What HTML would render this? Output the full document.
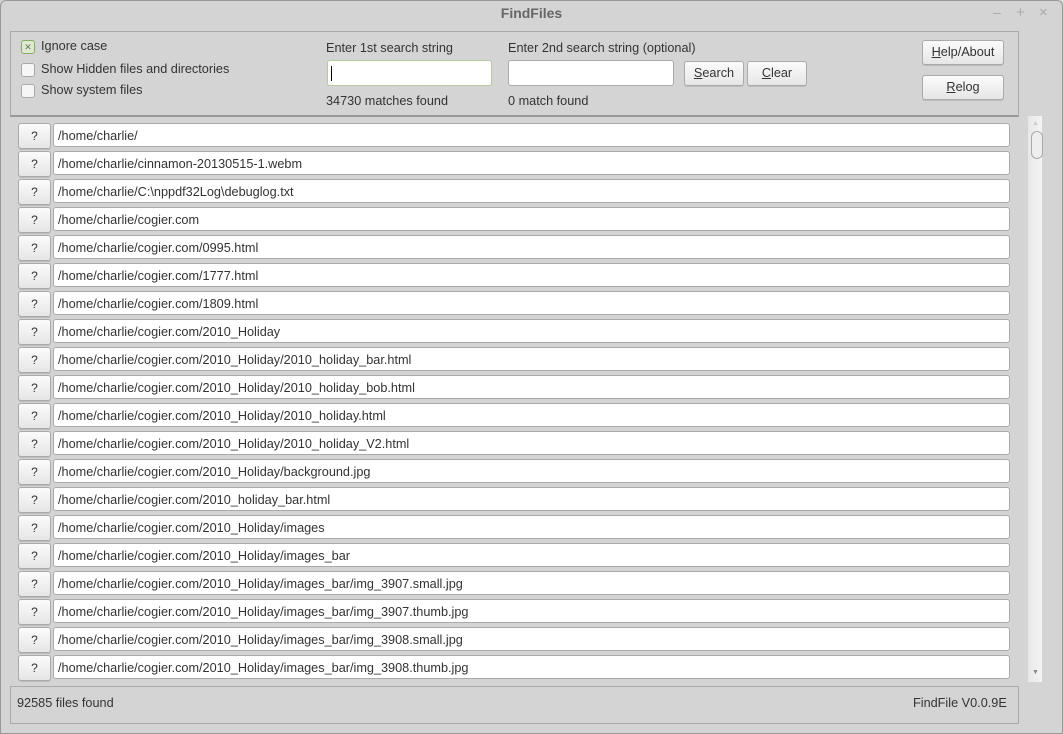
<!DOCTYPE html>
<html><head><style>
body{margin:0;width:1063px;height:734px;background:#d4d4d4;font-family:"Liberation Sans",sans-serif;font-size:12.7px;color:#333;position:relative;overflow:hidden}
.a{position:absolute}
.title{left:0;top:0;width:1063px;height:26px;text-align:center;line-height:26px;font-weight:bold;font-size:14px;color:#666}
.panel{left:10px;top:31px;width:1007px;height:83px;border:1px solid #aaa;border-bottom:2px solid #999}
.cb{width:12px;height:12px;border:1px solid #aaa;border-radius:3px;background:#f6f6f6}
.btn{border:1px solid #aaa;border-radius:3px;background:linear-gradient(#fbfbfb,#e6e6e6);text-align:center;box-shadow:0 1px 0 #bbb;color:#333}
.inp{background:#fff;border:1px solid #aaa;border-radius:3px}
.row{left:18px;height:26px;width:992px}
.q{position:absolute;left:0;top:0;width:31px;height:24px;line-height:24px;font-size:12px}
.f{position:absolute;left:35px;top:0;height:24px;line-height:24px;padding-left:4px;box-sizing:border-box;width:957px}
.status{left:10px;top:686px;width:1007px;height:36px;border:1px solid #aaa}
</style></head><body>
<div class="a" style="left:0;top:0;width:1061px;height:732px;border:1px solid #999;border-radius:6px 6px 0 0"></div>
<div class="a title">FindFiles</div>
<div class="a" style="left:993px;top:4px;color:#aaa;font-size:14px">–</div>
<div class="a" style="left:1016px;top:4px;color:#aaa;font-size:15px">+</div>
<div class="a" style="left:1039px;top:4px;color:#aaa;font-size:15px">×</div>
<div class="a panel"></div>
<div class="a cb" style="left:21px;top:40px;border-color:#8a6;background:#dfe9cf;font-size:9px;line-height:12px;text-align:center;color:#676">✕</div>
<div class="a" style="left:41px;top:39px">Ignore case</div>
<div class="a cb" style="left:21px;top:63px"></div>
<div class="a" style="left:41px;top:62px">Show Hidden files and directories</div>
<div class="a cb" style="left:21px;top:84px"></div>
<div class="a" style="left:41px;top:83px">Show system files</div>
<div class="a" style="left:326px;top:41px">Enter 1st search string</div>
<div class="a inp" style="left:327px;top:60px;width:163px;height:24px;border-color:#b8c8a0"><div style="position:absolute;left:3px;top:5px;width:1px;height:15px;background:#000"></div></div>
<div class="a" style="left:326px;top:94px">34730 matches found</div>
<div class="a" style="left:508px;top:41px">Enter 2nd search string (optional)</div>
<div class="a inp" style="left:508px;top:60px;width:164px;height:24px"></div>
<div class="a" style="left:508px;top:94px">0 match found</div>
<div class="a btn" style="left:684px;top:61px;width:58px;height:23px;line-height:23px"><u>S</u>earch</div>
<div class="a btn" style="left:747px;top:61px;width:58px;height:23px;line-height:23px"><u>C</u>lear</div>
<div class="a btn" style="left:922px;top:40px;width:80px;height:23px;line-height:23px"><u>H</u>elp/About</div>
<div class="a btn" style="left:922px;top:75px;width:80px;height:23px;line-height:23px"><u>R</u>elog</div>
<div class="a" style="left:1028px;top:116px;width:14px;height:566px;background:linear-gradient(90deg,#e8e8e8,#f4f4f4)"></div>
<div class="a" style="left:1031px;top:131px;width:10px;height:26px;border:1px solid #aaa;border-radius:6px;background:#eee"></div>
<div class="a" style="left:1032px;top:120px;font-size:7px;color:#ccc">▲</div>
<div class="a" style="left:1032px;top:669px;font-size:7px;color:#888">▼</div>
<div id="rows"></div>
<div class="a status"></div>
<div class="a" style="left:17px;top:696px">92585 files found</div>
<div class="a" style="left:913px;top:696px">FindFile V0.0.9E</div>
<script>
var p=["/home/charlie/","/home/charlie/cinnamon-20130515-1.webm","/home/charlie/C:\\nppdf32Log\\debuglog.txt","/home/charlie/cogier.com","/home/charlie/cogier.com/0995.html","/home/charlie/cogier.com/1777.html","/home/charlie/cogier.com/1809.html","/home/charlie/cogier.com/2010_Holiday","/home/charlie/cogier.com/2010_Holiday/2010_holiday_bar.html","/home/charlie/cogier.com/2010_Holiday/2010_holiday_bob.html","/home/charlie/cogier.com/2010_Holiday/2010_holiday.html","/home/charlie/cogier.com/2010_Holiday/2010_holiday_V2.html","/home/charlie/cogier.com/2010_Holiday/background.jpg","/home/charlie/cogier.com/2010_holiday_bar.html","/home/charlie/cogier.com/2010_Holiday/images","/home/charlie/cogier.com/2010_Holiday/images_bar","/home/charlie/cogier.com/2010_Holiday/images_bar/img_3907.small.jpg","/home/charlie/cogier.com/2010_Holiday/images_bar/img_3907.thumb.jpg","/home/charlie/cogier.com/2010_Holiday/images_bar/img_3908.small.jpg","/home/charlie/cogier.com/2010_Holiday/images_bar/img_3908.thumb.jpg"];
var h="";p.forEach(function(s,i){var t=123+i*28;h+='<div class="a row" style="top:'+t+'px"><div class="btn q">?</div><div class="inp f"></div></div>';});
document.getElementById("rows").innerHTML=h;
var fs=document.querySelectorAll(".f");p.forEach(function(s,i){fs[i].textContent=s;});
</script>
</body></html>
